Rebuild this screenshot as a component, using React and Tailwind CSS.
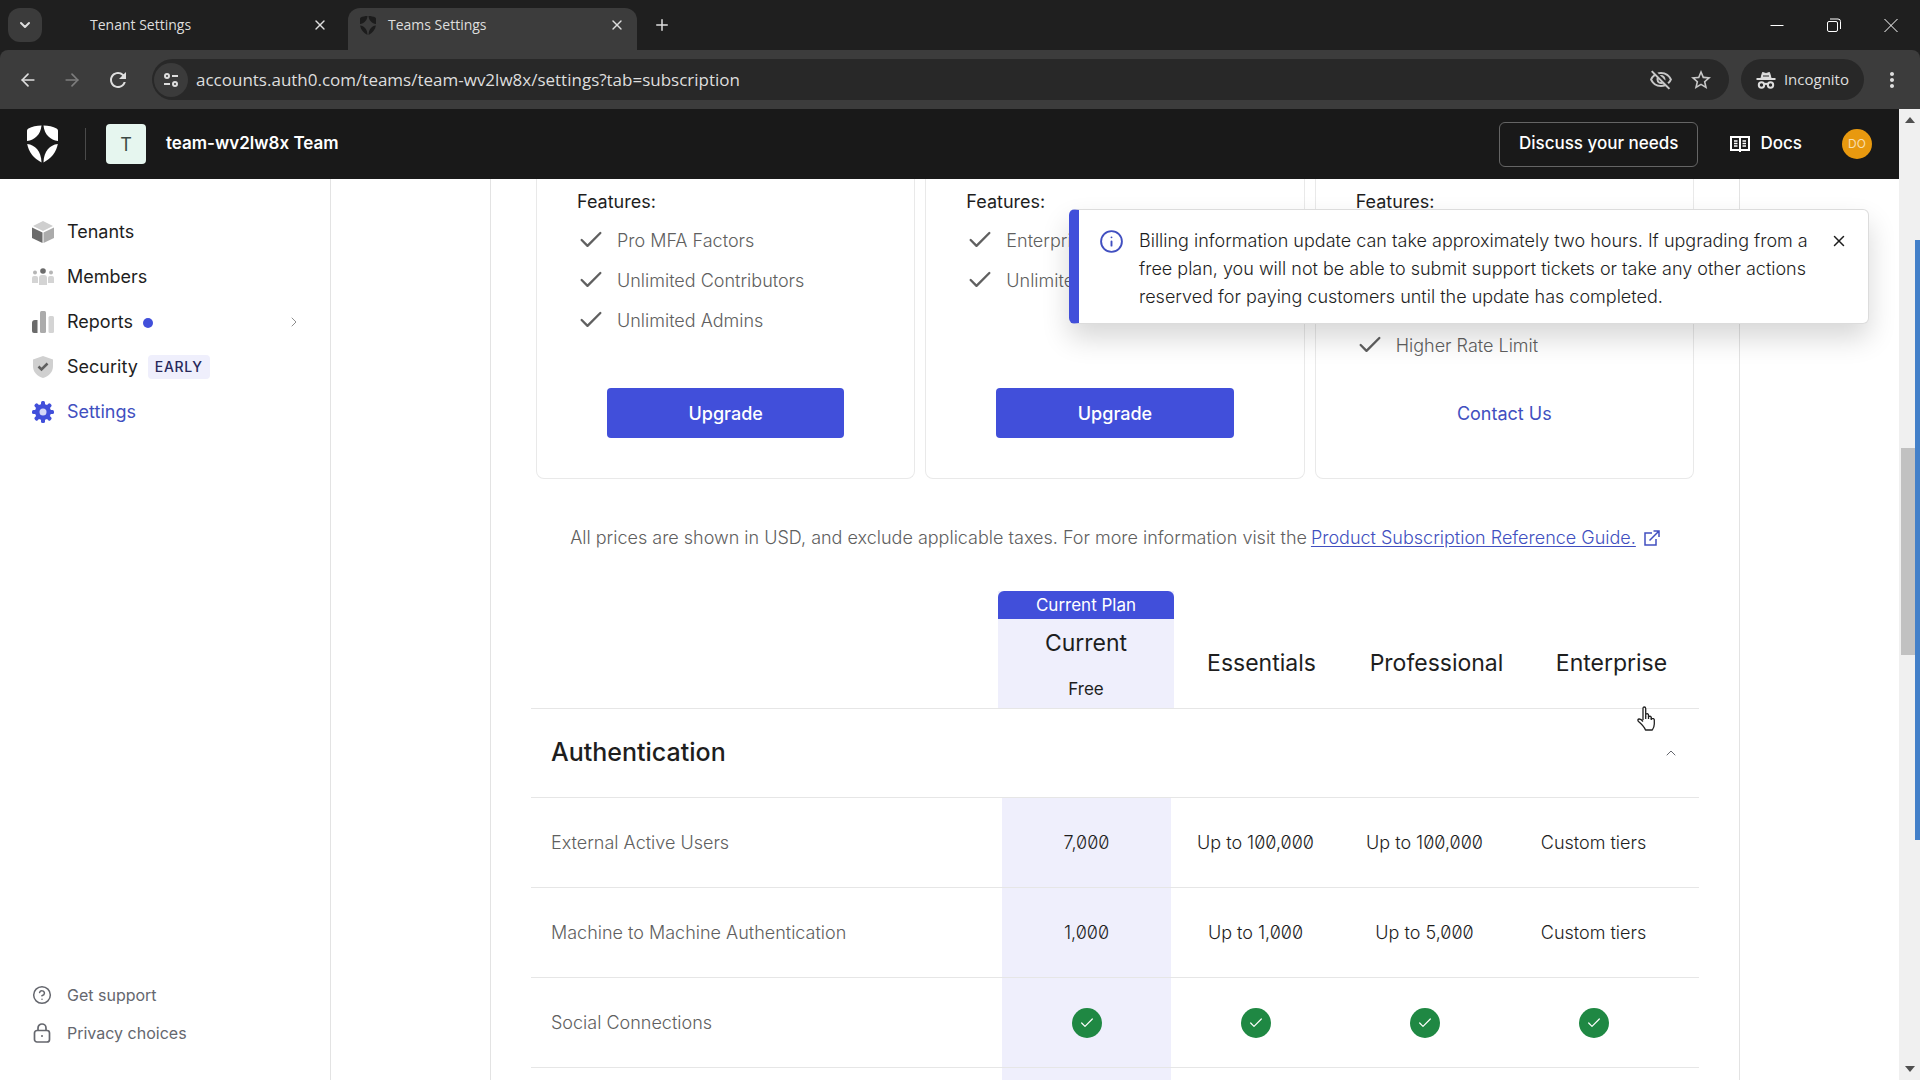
import { ArrowLeft, ArrowRight, Check, ChevronDown, ChevronRight, ChevronUp, CircleHelp, Info, Plus, X } from "lucide-react"
import { MdRefresh, MdOutlineStarOutline, MdOutlineVisibilityOff, MdMoreVert } from "react-icons/md"

const ShieldLogo = ({ className }) => (
    <svg viewBox="0 0 32 38" className={className} fill="currentColor">
        <path d="M15 0C10 0 5 1 1.500 3C.5 3.600 0 4.500 0 5.500V16C8 15 14 9.500 15 0Z" />
        <path d="M17 0c5 0 10 1 13.500 3c1 .6 1.500 1.500 1.500 2.500V16C24 15 18 9.500 17 0Z" />
        <path d="M.2 19C8.500 20 14.500 26 15 38C7 34 1.500 27 .2 19Z" />
        <path d="M31.800 19C23.500 20 17.500 26 17 38c8-4 13.500-11 14.800-19Z" />
    </svg>
)

const IncognitoIcon = () => (
    <svg viewBox="0 0 20 20" className="w-5 h-5" fill="none" stroke="currentColor" strokeWidth="2">
        <path d="M5 8 6.500 2.500 10 3.500l3.500-1L15 8Z" fill="currentColor" strokeWidth="1" />
        <path d="M7 6h6" stroke="#282828" strokeWidth="1" />
        <path d="M.5 9h19" />
        <circle cx="5.500" cy="15" r="2.700" />
        <circle cx="14.500" cy="15" r="2.700" />
        <path d="M8 14.500c1.200-.8 2.800-.8 4 0" />
    </svg>
)

const TuneIcon = () => (
    <svg viewBox="0 0 16 16" className="w-4 h-4" fill="none" stroke="currentColor" strokeWidth="2">
        <circle cx="4" cy="4" r="2" />
        <path d="M9 4h6M1 12h6" />
        <circle cx="12" cy="12" r="2" />
    </svg>
)

const BookIcon = () => (
    <svg viewBox="0 0 20 18" className="w-5 h-[18px]" fill="none" stroke="currentColor" strokeWidth="2">
        <path d="M1 2h18v13H1ZM10 2v15" />
        <path d="M4 6h3.500M4 8.500h3.500M4 11h3.500M12.500 6H16M12.500 8.500H16M12.500 11H16" strokeWidth="1.500" />
    </svg>
)

const TenantsIcon = () => (
    <svg viewBox="0 0 22 22" className="w-[22px] h-[22px]">
        <path d="M11 0 21 5 11 10 1 5Z" fill="#cfcfcf" />
        <path d="M0 6.500 10.500 11.500V22L0 17Z" fill="#6b6b6b" />
        <path d="M11.500 11.500 22 6.500V17L11.500 22Z" fill="#ababab" />
    </svg>
)

const MembersIcon = () => (
    <svg viewBox="0 0 22 22" className="w-[22px] h-[22px]">
        <g fill="#d4d4d4">
            <path d="M7 19v-7q0-3 3-3h2q3 0 3 3v7Z" />
            <path d="M0 17v-5q0-2 2-2h2q2 0 2 2v5Z" />
            <path d="M16 17v-5q0-2 2-2h2q2 0 2 2v5Z" />
        </g>
        <circle cx="3" cy="6.500" r="2" fill="#b5b5b5" />
        <circle cx="19" cy="6.500" r="2" fill="#b5b5b5" />
        <circle cx="11" cy="5" r="2.800" fill="#6b6b6b" />
    </svg>
)

const ReportsIcon = () => (
    <svg viewBox="0 0 22 22" className="w-[22px] h-[22px]">
        <path d="M0 12q0-3 3-3h2.500v13H2q-2 0-2-2Z" fill="#6b6b6b" />
        <rect x="8" y="0" width="6" height="22" rx="1.500" fill="#ababab" />
        <rect x="16.500" y="5" width="5.500" height="17" rx="1.500" fill="#d4d4d4" />
    </svg>
)

const SecurityIcon = () => (
    <svg viewBox="0 0 22 22" className="w-[22px] h-[22px]">
        <path d="M11 0 21 3.500V10c0 6-4 10-10 12C5 20 1 16 1 10V3.500Z" fill="#d0d0d0" />
        <path d="m6.500 10.500 3 3 6-6" fill="none" stroke="#5f5f5f" strokeWidth="2.500" />
    </svg>
)

const SettingsIcon = () => (
    <svg viewBox="0 0 22 22" className="w-[22px] h-[22px]">
        <g fill="#414fda">
            <circle cx="11" cy="11" r="8" />
            <rect x="9" y="0" width="4" height="22" rx="1.500" />
            <rect x="0" y="9" width="22" height="4" rx="1.500" />
            <rect x="9" y="0" width="4" height="22" rx="1.500" transform="rotate(45 11 11)" />
            <rect x="9" y="0" width="4" height="22" rx="1.500" transform="rotate(-45 11 11)" />
        </g>
        <circle cx="11" cy="11" r="3.500" fill="#d5d8f7" />
    </svg>
)

const LockIcon = () => (
    <svg viewBox="0 0 20 20" className="w-5 h-5" fill="none" stroke="currentColor" strokeWidth="1.700">
        <rect x="2.500" y="7.500" width="15" height="11.500" rx="2.500" />
        <path d="M6 7.500V5a4 4 0 0 1 8 0v2.500" />
        <circle cx="10" cy="13" r="1" fill="currentColor" stroke="none" />
    </svg>
)

const ExternalIcon = () => (
    <svg viewBox="0 0 16 16" className="w-4 h-4" fill="none" stroke="currentColor" strokeWidth="1.500">
        <path d="M8 3H1v12h11V9" />
        <path d="M9.500 1H15v6M15 1 5.500 10.500" />
    </svg>
)

const HandCursor = () => (
    <svg viewBox="0 0 19 25" className="absolute left-[1637px] top-[706px] w-[19px] h-[25px] z-30 pointer-events-none" fill="#fff" stroke="#222" strokeWidth="1.300" strokeLinejoin="round">
        <path d="M6 14V2.500q0-1.500 1.300-1.500T8.700 2.500V10v-2q2.800-.8 2.800 1v1.500q2.700-.8 2.800 1v1.200q2.800-.6 3 1.200V18q0 3-2 6H8.500Q7 20 1.500 15.500q-1.500-2 .5-2.500 2-.2 4 2.500" />
        <path d="M8.700 10v3M11.500 10.500V13M14.300 11.500V14" />
    </svg>
)

const nav = [
    { label: "Tenants", icon: <TenantsIcon /> },
    { label: "Members", icon: <MembersIcon /> },
    { label: "Reports", icon: <ReportsIcon />, dot: true },
    { label: "Security", icon: <SecurityIcon />, badge: "EARLY" },
    { label: "Settings", icon: <SettingsIcon />, active: true },
]

const plans = [
    { features: ["Pro MFA Factors", "Unlimited Contributors", "Unlimited Admins"], action: "Upgrade", listClass: "mt-1" },
    { features: ["Enterprise", "Unlimited"], action: "Upgrade", listClass: "mt-1" },
    { features: ["Higher Rate Limit"], action: "Contact Us", listClass: "mt-1 pt-[105px]" },
]

const rows = [
    { name: "External Active Users", values: ["7,000", "Up to 100,000", "Up to 100,000", "Custom tiers"] },
    { name: "Machine to Machine Authentication", values: ["1,000", "Up to 1,000", "Up to 5,000", "Custom tiers"] },
    { name: "Social Connections", values: [true, true, true, true] },
    { name: "", values: ["", "", "", ""] },
]

const BrowserBar = () => (
    <div className="shrink-0 bg-[#1f1f1f] font-['Open_Sans',sans-serif] text-[#dedede]">
        <div className="flex h-[50px] items-center pl-2">
            <button aria-label="Search tabs" className="flex w-[34px] h-[34px] items-center justify-center rounded-xl bg-[#3b3b3b]">
                <ChevronDown size={16} strokeWidth={3} />
            </button>
            <div className="flex w-[306px] items-center pl-12 pr-5 text-sm">
                <span className="flex-1">Tenant Settings</span>
                <button aria-label="Close Tenant Settings">
                    <X size={16} strokeWidth={2} />
                </button>
            </div>
            <div className="flex w-[289px] h-[42px] items-center gap-3 self-end rounded-t-xl bg-[#3c3c3c] pb-2 pl-3 pr-3 text-sm">
                <ShieldLogo className="w-4 h-[19px] text-[#1c1c1c]" />
                <span className="flex-1">Teams Settings</span>
                <button aria-label="Close Teams Settings">
                    <X size={16} strokeWidth={2} />
                </button>
            </div>
            <button aria-label="New tab" className="ml-4">
                <Plus size={18} strokeWidth={2} />
            </button>
            <div className="ml-auto flex items-center gap-[41px] pr-[21px] text-white">
                <button aria-label="Minimize" className="w-4 h-4">
                    <svg viewBox="0 0 16 16" className="w-4 h-4" stroke="currentColor"><path d="M1.500 8.500h13" /></svg>
                </button>
                <button aria-label="Restore" className="w-4 h-4">
                    <svg viewBox="0 0 16 16" className="w-4 h-4" fill="none" stroke="currentColor">
                        <rect x="1.500" y="4.500" width="10" height="10" rx="1.500" />
                        <path d="M4 2h8q2.500 0 2.500 2.500V12" />
                    </svg>
                </button>
                <button aria-label="Close window" className="w-4 h-4">
                    <svg viewBox="0 0 16 16" className="w-4 h-4" stroke="currentColor"><path d="m1.500 2 13 13m0-13-13 13" /></svg>
                </button>
            </div>
        </div>
        <div className="flex h-[59px] items-center rounded-t-lg bg-[#3c3c3c] pb-2 pt-2 pl-[18px] pr-4">
            <button aria-label="Back" className="mr-6"><ArrowLeft size={20} /></button>
            <button aria-label="Forward" className="mr-6 text-[#7d7d7d]"><ArrowRight size={20} /></button>
            <button aria-label="Reload" className="mr-[22px]"><MdRefresh size={24} /></button>
            <div className="flex h-[41px] flex-1 items-center rounded-full bg-[#282828] pl-0.5 pr-4">
                <button aria-label="Site information" className="flex w-[34px] h-[34px] items-center justify-center rounded-full bg-[#3b3b3b]">
                    <TuneIcon />
                </button>
                <input
                    aria-label="Address"
                    className="ml-2 flex-1 bg-transparent text-[17px] outline-none"
                    defaultValue="accounts.auth0.com/teams/team-wv2lw8x/settings?tab=subscription"
                />
                <button aria-label="Cookies blocked" className="mr-4 text-[#c7c7c7]"><MdOutlineVisibilityOff size={24} /></button>
                <button aria-label="Bookmark" className="text-[#c7c7c7]"><MdOutlineStarOutline size={24} /></button>
            </div>
            <button className="ml-3 flex h-[41px] items-center gap-2 rounded-full bg-[#282828] px-[15px] text-[15px]">
                <IncognitoIcon />
                Incognito
            </button>
            <button aria-label="Menu" className="ml-4"><MdMoreVert size={24} /></button>
        </div>
    </div>
)

const AppHeader = () => (
    <header className="flex h-[70px] shrink-0 items-center bg-[#191919] pl-[27px] pr-[27px] text-white">
        <ShieldLogo className="w-[31px] h-[38px]" />
        <div className="ml-[27px] h-8 w-px bg-[#4a4a4a]" />
        <div className="ml-5 flex w-10 h-10 items-center justify-center rounded-sm bg-[#e6f6ef] text-[18px] text-[#3c4a44]">T</div>
        <span className="ml-5 text-[17px] font-semibold">team-wv2lw8x Team</span>
        <button className="ml-auto h-[45px] rounded-md border border-[#656565] px-[19px] text-[17px] font-medium">
            Discuss your needs
        </button>
        <a href="#docs" className="ml-8 flex items-center gap-2.5 text-[17px] font-medium">
            <BookIcon />
            Docs
        </a>
        <button aria-label="Account" className="ml-10 flex w-[30px] h-[30px] items-center justify-center rounded-full bg-[#e8990f] text-xs text-[#f8dfae]">
            DO
        </button>
    </header>
)

const Sidebar = () => (
    <aside className="flex w-[331px] shrink-0 flex-col justify-between border-r border-[#e3e3e3] pb-7 pl-8 pr-7 pt-[30px]">
        <nav>
            {nav.map((item) => (
                <a key={item.label} href="#nav" className="flex h-[45px] items-center text-[18px] text-[#1e1e1e]">
                    {item.icon}
                    <span className={item.active ? "ml-[13px] text-[#414fc0]" : "ml-[13px]"}>{item.label}</span>
                    {item.dot && <span className="ml-2.5 mt-0.5 w-2.5 h-2.5 rounded-full bg-[#414fda]" />}
                    {item.dot && <ChevronRight size={16} strokeWidth={1.500} className="ml-auto text-[#8e8e8e]" />}
                    {item.badge && (
                        <span className="ml-2.5 rounded bg-[#efeffc] px-[7px] py-0.5 text-sm font-medium tracking-wider text-[#28285a]">
                            {item.badge}
                        </span>
                    )}
                </a>
            ))}
        </nav>
        <div className="text-base text-[#65676e]">
            <a href="#support" className="flex h-[38px] items-center gap-[15px]">
                <CircleHelp size={20} strokeWidth={1.800} />
                Get support
            </a>
            <a href="#privacy" className="flex h-[38px] items-center gap-[15px]">
                <LockIcon />
                Privacy choices
            </a>
        </div>
    </aside>
)

const PlanCard = ({ plan }) => (
    <div className="flex h-[300px] flex-col rounded-b-lg border border-t-0 border-[#e9e9e9] px-10 pb-10 pt-[11px]">
        <p className="text-[18px] leading-6 text-[#1e1e1e]">Features:</p>
        <ul className={plan.listClass}>
            {plan.features.map((feature) => (
                <li key={feature} className="flex h-10 items-center gap-3 pt-1 text-[18px] font-light text-[#606060]">
                    <Check size={28} strokeWidth={2} />
                    {feature}
                </li>
            ))}
        </ul>
        {plan.action === "Upgrade" ? (
            <button className="mx-[30px] mt-auto h-[50px] shrink-0 rounded bg-[#414fda] text-[18px] font-medium text-white">Upgrade</button>
        ) : (
            <a href="#contact" className="mx-[30px] mt-auto flex h-[50px] items-center justify-center text-[18px] text-[#414fc0]">
                {plan.action}
            </a>
        )}
    </div>
)

const GreenCheck = () => (
    <span className="mx-auto flex w-[30px] h-[30px] items-center justify-center rounded-full bg-[#1f8843] text-white">
        <Check size={16} strokeWidth={1.800} />
    </span>
)

const Comparison = () => (
    <div className="px-10 pt-[39px]">
        <table className="w-full table-fixed border-b border-[#e6e6e6] text-[23px] text-[#1e1e1e]">
            <thead>
                <tr className="h-[117px]">
                    <td />
                    <th className="w-[176px] bg-[#efeffc] p-0 align-top font-normal">
                        <div className="rounded-t-md bg-[#414fda] text-[17px] leading-7 text-white">Current Plan</div>
                        <div className="pt-2 leading-8">Current</div>
                        <div className="pt-4 text-[17px] leading-7">Free</div>
                    </th>
                    <th className="w-[175px] p-0 pt-7 font-normal">Essentials</th>
                    <th className="w-[175px] p-0 pt-7 font-normal">Professional</th>
                    <th className="w-[175px] p-0 pt-7 font-normal">Enterprise</th>
                </tr>
            </thead>
        </table>
        <button className="flex h-[89px] w-full items-center justify-between border-b border-[#e6e6e6] pl-5 pr-5 text-[#1e1e1e]">
            <span className="text-[25px] font-medium">Authentication</span>
            <ChevronUp size={16} strokeWidth={1.500} className="text-[#65676e]" />
        </button>
        <table className="w-full table-fixed text-[18px]">
            <tbody>
                {rows.map((row, i) => (
                    <tr key={i} className="h-[90px] border-b border-[#e6e6e6] font-light text-[#1e1e1e]">
                        <th className="p-0 pl-5 text-left font-light text-[#606060]">{row.name}</th>
                        {row.values.map((value, j) => (
                            <td key={j} className={j === 0 ? "w-[169px] bg-[#efeffc] p-0 text-center slashed-zero" : "w-[169px] p-0 text-center slashed-zero"}>
                                {value === true ? <GreenCheck /> : value}
                            </td>
                        ))}
                        <td className="w-[21px]" />
                    </tr>
                ))}
            </tbody>
        </table>
    </div>
)

const Toast = () => (
    <div role="status" className="absolute right-[30px] top-[30px] z-20 flex w-[800px] rounded-md border border-l-[10px] border-[#dcdcdc] border-l-[#414fda] bg-white pb-3 pl-5 pr-5 pt-[17px] shadow-[0_14px_28px_rgba(0,0,0,0.16)]">
        <Info size={25} strokeWidth={1.800} className="mt-0.5 shrink-0 text-[#414fc0]" />
        <p className="ml-[15px] flex-1 text-[18px] font-light leading-7 text-[#1e1e1e]">
            Billing information update can take approximately two hours. If upgrading from a
            <br />
            free plan, you will not be able to submit support tickets or take any other actions
            <br />
            reserved for paying customers until the update has completed.
        </p>
        <button aria-label="Dismiss" className="h-7 text-[#1e1e1e]">
            <X size={18} strokeWidth={2} />
        </button>
    </div>
)

const Scrollbar = () => (
    <div className="relative flex w-[21px] shrink-0 flex-col items-center justify-between bg-[#f0f0f0] py-2">
        <div className="h-0 w-0 border-x-[5px] border-b-[6px] border-x-transparent border-b-[#505050]" />
        <div className="h-0 w-0 border-x-[5px] border-t-[6px] border-x-transparent border-t-[#505050]" />
        <div className="absolute right-0 top-[339px] h-[207px] w-[19px] bg-[#c1c1c1]" />
        <div className="absolute right-0 top-[131px] h-[600px] w-[5px] bg-[#4380c9]" />
    </div>
)

const App = () => {
    return (
        <div className="relative flex h-screen flex-col overflow-hidden bg-white font-['Inter',sans-serif]">
            <BrowserBar />
            <div className="flex min-h-0 flex-1">
                <div className="flex min-w-0 flex-1 flex-col">
                    <AppHeader />
                    <div className="relative flex min-h-0 flex-1">
                        <Sidebar />
                        <main className="flex-1 overflow-hidden">
                            <div className="mx-auto max-w-[1250px] border-x border-[#e3e3e3]">
                                <div className="grid grid-cols-3 gap-2.5 px-[45px]">
                                    {plans.map((plan, i) => (
                                        <PlanCard key={i} plan={plan} />
                                    ))}
                                </div>
                                <p className="flex items-center justify-center pt-[45px] text-[18px] font-light leading-7 text-[#606060]">
                                    All prices are shown in USD, and exclude applicable taxes. For more information visit the
                                    <a href="#guide" className="ml-1 flex items-center gap-2 text-[#414fc0]">
                                        <span className="underline underline-offset-2">Product Subscription Reference Guide.</span>
                                        <ExternalIcon />
                                    </a>
                                </p>
                                <Comparison />
                            </div>
                        </main>
                        <Toast />
                    </div>
                </div>
                <Scrollbar />
            </div>
            <HandCursor />
        </div>
    )
}

export default App
